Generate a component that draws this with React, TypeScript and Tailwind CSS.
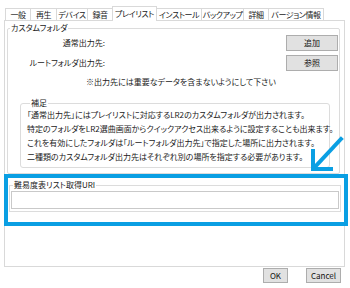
import React from "react";

const tabs = [
  { label: "一般", w: "w-[26px]" },
  { label: "再生", w: "w-[26px]" },
  { label: "デバイス", w: "w-[31px]" },
  { label: "録音", w: "w-[25px]" },
  { label: "プレイリスト", w: "w-[45px]", active: true },
  { label: "インストール", w: "w-[45px]" },
  { label: "バックアップ", w: "w-[42px]" },
  { label: "詳細", w: "w-[25px]" },
  { label: "バージョン情報", w: "w-[55px]" },
];

const notes = [
  "「通常出力先」にはプレイリストに対応するLR2のカスタムフォルダが出力されます。",
  "特定のフォルダをLR2選曲画面からクイックアクセス出来るように設定することも出来ます。",
  "これを有効にしたフォルダは「ルートフォルダ出力先」で指定した場所に出力されます。",
  "二種類のカスタムフォルダ出力先はそれぞれ別の場所を指定する必要があります。",
];

function Button({ label, className }: { label: string; className: string }) {
  return (
    <button
      className={`flex items-center justify-center border border-[#adadad] bg-[#e1e1e1] leading-none text-[#111] ${className}`}
    >
      {label}
    </button>
  );
}

export default function App() {
  return (
    <div className="relative h-[288px] w-[350px] overflow-hidden bg-white font-['Noto_Sans_CJK_JP',sans-serif] text-[8px] text-[#1a1a1a] [font-feature-settings:'palt']">
      {/* tabs */}
      <div className="flex h-[20px] items-end pl-[5px] pt-[6px] tracking-[-0.4px]">
        {tabs.map((t, i) =>
          t.active ? (
            <div
              key={i}
              className={`relative z-10 -mb-px -ml-px flex h-[15px] items-center justify-center whitespace-nowrap border border-b-0 border-[#d9d9d9] bg-white ${t.w}`}
            >
              {t.label}
            </div>
          ) : (
            <div
              key={i}
              className={`flex h-[12px] items-center justify-center whitespace-nowrap border-t border-r border-[#d9d9d9] bg-white ${i === 0 ? "border-l" : ""} ${t.w}`}
            >
              {t.label}
            </div>
          )
        )}
      </div>

      {/* tab page */}
      <div className="ml-[4px] h-[247px] w-[341px] border border-[#d9d9d9] bg-white">
        <fieldset className="ml-[2px] mt-[1px] w-[333px] min-w-0 rounded-[2px] border border-[#dcdcdc] pb-[5px]">
          <legend className="ml-[2px] px-[1px] leading-[12px]">カスタムフォルダ</legend>
          <div className="mt-[1px] flex h-[16px] items-center">
            <span className="w-[97px] text-right">通常出力先:</span>
            <div className="flex-1" />
            <Button label="追加" className="mr-[1px] h-[16px] w-[52px]" />
          </div>
          <div className="mt-[4px] flex h-[16px] items-center">
            <span className="w-[97px] text-right">ルートフォルダ出力先:</span>
            <div className="flex-1" />
            <Button label="参照" className="mr-[1px] h-[16px] w-[52px]" />
          </div>
          <p className="mt-[5px] pl-[78px] leading-[12px]">※出力先には重要なデータを含まないようにして下さい</p>

          <fieldset className="ml-[12px] mt-[10px] w-[310px] min-w-0 rounded-[3px] border border-[#dcdcdc] pb-[3px] pl-[6px]">
            <legend className="ml-[3px] px-[1px] leading-[10px]">補足</legend>
            {notes.map((n, i) => (
              <p key={i} className="whitespace-nowrap leading-[14px]">
                {n}
              </p>
            ))}
          </fieldset>
        </fieldset>

        <fieldset className="ml-[4px] mt-[5px] w-[332px] min-w-0 border border-[#dcdcdc] pb-[2px]">
          <legend className="ml-[3px] px-[1px] leading-[12px]">難易度表リスト取得URI</legend>
          <div className="mx-[1px] h-[18px] border border-[#c9c9c9] bg-white" />
        </fieldset>
      </div>

      {/* dialog buttons */}
      <div className="mt-[1px] flex justify-end gap-[18px] pr-[9px]">
        <Button label="OK" className="h-[15px] w-[25px]" />
        <Button label="Cancel" className="h-[15px] w-[35px]" />
      </div>

      {/* annotation */}
      <div className="absolute left-[4px] top-[174px] h-[52px] w-[344px] border-[4px] border-[#0a9fe3]" />
      <svg className="absolute left-0 top-0" width="350" height="288" viewBox="0 0 350 288">
        <g stroke="#0a9fe3" strokeWidth="4" fill="none" strokeLinecap="square">
          <line x1="341" y1="139" x2="315" y2="167" />
          <polyline points="313,151 313,169 331,169" />
        </g>
      </svg>
    </div>
  );
}
